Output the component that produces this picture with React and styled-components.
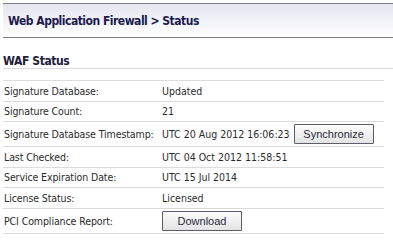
import React from 'react';
import styled, { createGlobalStyle } from 'styled-components';

const rows = [
    { label: 'Signature Database:', value: 'Updated' },
    { label: 'Signature Count:', value: '21' },
    {
        label: 'Signature Database Timestamp:',
        value: 'UTC 20 Aug 2012 16:06:23',
        button: 'Synchronize',
    },
    { label: 'Last Checked:', value: 'UTC 04 Oct 2012 11:58:51' },
    { label: 'Service Expiration Date:', value: 'UTC 15 Jul 2014' },
    { label: 'License Status:', value: 'Licensed' },
    { label: 'PCI Compliance Report:', button: 'Download' },
];

const App = () => {
    return (
        <>
            <GlobalStyle />
            <Page>
                <Header>
                    <Title>Web Application Firewall &gt; Status</Title>
                </Header>
                <SectionTitle>WAF Status</SectionTitle>
                <Table>
                    {rows.map((row) => (
                        <Row key={row.label} $tall={!!row.button}>
                            <Label>{row.label}</Label>
                            <Value>
                                {row.value && <span>{row.value}</span>}
                                {row.button && <Button>{row.button}</Button>}
                            </Value>
                        </Row>
                    ))}
                </Table>
            </Page>
        </>
    );
};

const GlobalStyle = createGlobalStyle`
    body {
        margin: 0;
        background: #fff;
        font-family: 'DejaVu Sans Condensed', 'DejaVu Sans', sans-serif;
    }
`;

const Page = styled.div`
    padding: 3px 0 0 3px;
    width: 390px;
`;

const Header = styled.div`
    display: flex;
    align-items: center;
    height: 33px;
    padding-left: 5px;
    border-top: 1px solid #7c7c88;
    border-bottom: 1px solid #7c7c88;
    background: linear-gradient(to bottom, #e4e5ee 0%, #ffffff 100%);
`;

const Title = styled.div`
    font-size: 12px;
    font-weight: bold;
    letter-spacing: -0.5px;
    color: #1b1b4f;
`;

const SectionTitle = styled.div`
    padding-top: 16px;
    line-height: 14px;
    font-size: 12px;
    font-weight: bold;
    letter-spacing: -0.4px;
    color: #20203a;
    border-bottom: 1px solid #dcdcdc;
`;

const Table = styled.div`
    margin-top: 11px;
    width: 381px;
    border-top: 1px solid #dcdcdc;
`;

const Row = styled.div`
    display: grid;
    grid-template-columns: 159px 1fr;
    align-items: center;
    height: ${(p) => (p.$tall ? '24px' : '19.5px')};
    border-bottom: 1px solid #dcdcdc;
    font-size: 10.5px;
    color: #2b2b2b;
`;

const Label = styled.div`
    padding-left: 1px;
    white-space: nowrap;
    letter-spacing: -0.1px;
`;

const Value = styled.div`
    display: flex;
    align-items: center;
    gap: 4px;
    white-space: nowrap;
`;

const Button = styled.button`
    width: 80px;
    height: 20px;
    padding: 0;
    border: 1px solid #5c5c6c;
    border-radius: 1px;
    background: linear-gradient(to bottom, #fdfdfd 0%, #e3e3e3 100%);
    font-family: 'Liberation Sans', Arial, sans-serif;
    font-size: 11px;
    color: #2a2a3a;
`;

export default App;
